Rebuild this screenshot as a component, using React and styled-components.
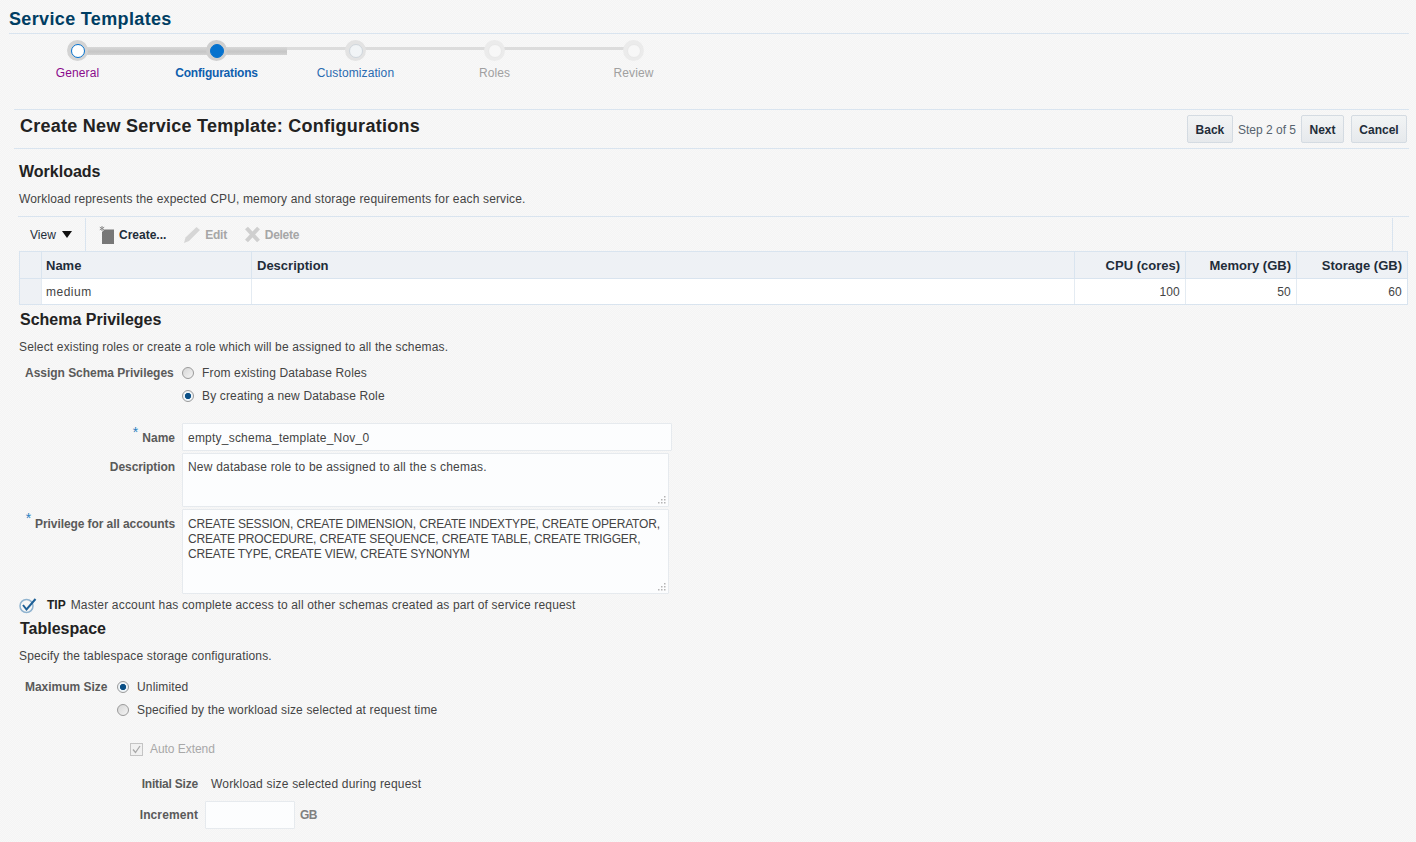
import React from 'react';
import styled, { createGlobalStyle } from 'styled-components';

const Global = createGlobalStyle`
  html, body { margin: 0; padding: 0; }
  body {
    font-family: "Liberation Sans", Arial, sans-serif;
    font-size: 12px;
    color: #3f3f3f;
    background: repeating-conic-gradient(#f4f4f4 0 25%, #f8f8f8 0 50%) 0 0 / 2px 2px;
  }
`;

const Page = styled.div`
  width: 1416px;
  height: 842px;
  overflow: hidden;
  display: flex;
  flex-direction: column;
`;

const PageHeader = styled.header`
  height: 33px;
  margin: 0 7px 0 9px;
  border-bottom: 1px solid #d9e4ef;
  display: flex;
  align-items: flex-end;
`;

const PageTitle = styled.h1`
  margin: 0 0 2px;
  font-size: 18px;
  line-height: 24px;
  font-weight: 700;
  letter-spacing: 0.35px;
  color: #003e63;
`;

const Train = styled.div`
  height: 75px;
  display: flex;
  padding-left: 8px;
  position: relative;
`;

const TrainTrack = styled.div`
  position: absolute;
  left: 78px;
  top: 13px;
  width: 556px;
  height: 3px;
  background: #dcdcdc;
`;

const TrainDone = styled.div`
  position: absolute;
  left: 78px;
  top: 13px;
  width: 209px;
  height: 8px;
  background: linear-gradient(#d8d8d8, #c6c6c6 60%, #d4d4d4);
`;

const Step = styled.div`
  width: 139px;
  display: flex;
  flex-direction: column;
  align-items: center;
  position: relative;
  padding-top: 6px;
`;

const Node = styled.div`
  width: 21px;
  height: 21px;
  box-sizing: border-box;
  border-radius: 50%;
  background: ${p => p.$ring};
  display: flex;
  align-items: center;
  justify-content: center;
`;

const Dot = styled.div`
  width: ${p => p.$size}px;
  height: ${p => p.$size}px;
  box-sizing: border-box;
  border-radius: 50%;
  background: ${p => p.$fill};
  border: 1px solid ${p => p.$edge};
`;

const StepLabel = styled.div`
  margin-top: 5px;
  line-height: 14px;
  letter-spacing: ${p => (p.$bold ? '-0.2px' : '0.1px')};
  color: ${p => p.$color};
  font-weight: ${p => (p.$bold ? 700 : 400)};
`;

const TitleBar = styled.div`
  height: 38px;
  margin: 0 7px 0 14px;
  border-top: 1px solid #d9e4ef;
  border-bottom: 1px solid #d9e4ef;
  display: flex;
  align-items: flex-start;
  justify-content: space-between;
`;

const FormTitle = styled.h2`
  margin: 5px 0 0 6px;
  font-size: 18px;
  line-height: 22px;
  font-weight: 700;
  letter-spacing: 0.26px;
  color: #222;
`;

const Actions = styled.div`
  display: flex;
  align-items: center;
  margin: 5px 2px 0 0;
`;

const ActionButton = styled.div`
  height: 28px;
  box-sizing: border-box;
  padding: 1px 8px 0;
  width: ${p => p.$w}px;
  justify-content: center;
  margin-left: ${p => p.$gap || 0}px;
  display: flex;
  align-items: center;
  border: 1px solid #d4dbe2;
  border-radius: 2px;
  background: linear-gradient(#f2f4f5, #e6e9ec);
  font-weight: 700;
  color: #1f2d3a;
`;

const StepInfo = styled.span`
  margin: 0 5px;
  padding-top: 1px;
  color: #57636f;
`;

const Section = styled.section`
  padding-left: 19px;
  margin-top: ${p => p.$top}px;
`;

const Heading = styled.h3`
  margin: 0;
  font-size: 16px;
  line-height: 20px;
  font-weight: 700;
  color: #222;
  margin-left: ${p => p.$indent || 0}px;
`;

const Intro = styled.p`
  margin: 7px 0 0;
  line-height: 20px;
  letter-spacing: 0.16px;
  color: #444;
`;

const Toolbar = styled.div`
  margin: 7px 7px 0 -1px;
  height: 35px;
  padding-top: 1px;
  box-sizing: border-box;
  border-top: 1px solid #d9e4ef;
  display: flex;
  align-items: center;
`;

const ViewMenu = styled.div`
  width: 68px;
  height: 100%;
  box-sizing: border-box;
  padding-left: 12px;
  border-right: 1px solid #d9e4ef;
  display: flex;
  align-items: center;
  gap: 6px;
  color: #1f2d3a;
`;

const Caret = styled.span`
  width: 0;
  height: 0;
  border-left: 5px solid transparent;
  border-right: 5px solid transparent;
  border-top: 7px solid #111;
`;

const ToolItem = styled.div`
  display: flex;
  align-items: center;
  gap: 4px;
  margin-left: ${p => p.$gap}px;
  font-weight: 700;
  letter-spacing: ${p => (p.$off ? '-0.3px' : '0')};
  color: ${p => (p.$off ? '#a6a6a6' : '#1f2d3a')};
`;

const ToolEnd = styled.div`
  margin-left: auto;
  width: 16px;
  height: 100%;
  border-left: 1px solid #d9e4ef;
`;

const Table = styled.div`
  width: 1389px;
  border: 1px solid #d9e4ef;
  box-sizing: border-box;
  height: 54px;
  display: grid;
  grid-template-columns: 21px 210px 823px 111px 111px 1fr;
  grid-template-rows: 27px 25px;
`;

const HeadCell = styled.div`
  background: #eef1f5;
  border-bottom: 1px solid #d9e4ef;
  border-left: ${p => (p.$first ? 'none' : '1px solid #d9e4ef')};
  padding: 1px 5px 0 ${p => p.$inset || 5}px;
  display: flex;
  align-items: center;
  justify-content: ${p => (p.$right ? 'flex-end' : 'flex-start')};
  font-weight: 700;
  font-size: 13px;
  color: #1f2d3a;
`;

const BodyCell = styled.div`
  background: #fff;
  border-left: 1px solid #e4ebf2;
  padding: 0 5px 0 ${p => p.$inset || 5}px;
  display: flex;
  align-items: center;
  justify-content: ${p => (p.$right ? 'flex-end' : 'flex-start')};
  letter-spacing: ${p => (p.$right ? '0.2px' : '0.5px')};
  color: #444;
`;

const RowHeader = styled.div`
  background: #eef1f5;
`;

const ChoiceGroup = styled.div`
  display: grid;
  grid-template-columns: ${p => p.$label}px 1fr;
  grid-auto-rows: 23px;
  margin: ${p => p.$top}px 0 0 6px;
  align-items: center;
`;

const GroupLabel = styled.span`
  font-weight: 700;
  color: #5a5a5a;
  letter-spacing: -0.03px;
`;

const Choice = styled.label`
  grid-column: 2;
  display: flex;
  align-items: center;
  gap: 8px;
  letter-spacing: 0.15px;
  color: #444;
`;

const Radio = styled.span`
  width: 12px;
  height: 12px;
  box-sizing: border-box;
  border-radius: 50%;
  border: 1px solid #9a9a9a;
  background: ${p => p.$on
    ? 'radial-gradient(circle, #0a4f86 0 2.8px, #eef4f8 3.4px)'
    : 'linear-gradient(135deg, #d6d6d6, #f4f4f4)'};
`;

const FormGrid = styled.div`
  display: grid;
  grid-template-columns: 156px auto;
  justify-content: start;
  margin: 16px 0 0 0;
  row-gap: 2px;
  column-gap: 7px;
`;

const FieldLabel = styled.div`
  text-align: right;
  font-weight: 700;
  color: #5a5a5a;
  line-height: 14px;
  letter-spacing: ${p => p.$ls || 0}px;
  padding-top: ${p => p.$pad || 0}px;
`;

const Req = styled.sup`
  color: #2a7fc0;
  font-weight: 400;
  font-size: 14px;
  line-height: 0;
  margin-right: 4px;
`;

const Field = styled.div`
  position: relative;
  box-sizing: border-box;
  width: ${p => p.$w}px;
  height: ${p => p.$h}px;
  padding: ${p => p.$pad}px 5px 0;
  border: 1px solid #e6eaee;
  border-radius: 1px;
  background: #fcfdfe;
  line-height: 15px;
  letter-spacing: ${p => p.$ls || 0}px;
  color: #444;
`;

const Grip = styled.svg`
  position: absolute;
  right: 1px;
  bottom: 1px;
`;

const Tip = styled.div`
  display: flex;
  align-items: center;
  height: 18px;
  margin-top: 2px;
  letter-spacing: 0.17px;
  color: #444;
`;

const TipWord = styled.strong`
  margin: 0 5px 0 10px;
  letter-spacing: 0;
  color: #222;
`;

const Disabled = styled.label`
  display: flex;
  align-items: center;
  gap: 7px;
  margin: 19px 0 0 111px;
  height: 18px;
  letter-spacing: -0.05px;
  color: #a8a8a8;
`;

const CheckBox = styled.span`
  width: 13px;
  height: 13px;
  box-sizing: border-box;
  border: 1px solid #c4c4c4;
  background: #f1f1f1;
  display: flex;
  align-items: center;
  justify-content: center;
`;

const Details = styled.div`
  display: grid;
  grid-template-columns: 179px auto;
  justify-content: start;
  align-items: center;
  column-gap: 7px;
  row-gap: 3px;
  grid-auto-rows: 28px;
  margin-top: 12px;
`;

const DetailValue = styled.span`
  margin-left: 6px;
  letter-spacing: 0.19px;
  color: #444;
`;

const UnitRow = styled.div`
  display: flex;
  align-items: center;
  gap: 5px;
  color: #808080;
  font-weight: 700;
  letter-spacing: -0.5px;
`;

const steps = [
  { name: 'General', ring: '#d3d3d3', size: 14, fill: '#fff', edge: '#0572ce', color: '#8a0a8c' },
  { name: 'Configurations', ring: '#cfcfcf', size: 14, fill: '#0572ce', edge: '#0572ce', color: '#0f5fae', bold: true },
  { name: 'Customization', ring: '#e3e3e3', size: 14, fill: '#f1f4f6', edge: '#cfd6dc', color: '#2a6bb0' },
  { name: 'Roles', ring: '#ebebeb', size: 14, fill: '#f7f7f7', edge: '#e8e8e8', color: '#a0a0a0' },
  { name: 'Review', ring: '#ebebeb', size: 14, fill: '#f7f7f7', edge: '#e8e8e8', color: '#a0a0a0' },
];

const ResizeGrip = () => (
  <Grip width="9" height="9" viewBox="0 0 9 9" fill="#b4b4b4">
    <rect x="6" y="0" width="1.5" height="1.5" />
    <rect x="3" y="3" width="1.5" height="1.5" />
    <rect x="6" y="3" width="1.5" height="1.5" />
    <rect x="0" y="6" width="1.5" height="1.5" />
    <rect x="3" y="6" width="1.5" height="1.5" />
    <rect x="6" y="6" width="1.5" height="1.5" />
  </Grip>
);

export default function App() {
  return (
    <Page>
      <Global />
      <PageHeader><PageTitle>Service Templates</PageTitle></PageHeader>
      <Train>
        <TrainTrack />
        <TrainDone />
        {steps.map(s => (
          <Step key={s.name}>
            <Node $ring={s.ring}><Dot $size={s.size} $fill={s.fill} $edge={s.edge} /></Node>
            <StepLabel $color={s.color} $bold={s.bold}>{s.name}</StepLabel>
          </Step>
        ))}
      </Train>
      <TitleBar>
        <FormTitle>Create New Service Template: Configurations</FormTitle>
        <Actions>
          <ActionButton $w={46}>Back</ActionButton>
          <StepInfo>Step 2 of 5</StepInfo>
          <ActionButton $w={43}>Next</ActionButton>
          <ActionButton $w={56} $gap={7}>Cancel</ActionButton>
        </Actions>
      </TitleBar>

      <Section $top={13}>
        <Heading>Workloads</Heading>
        <Intro>Workload represents the expected CPU, memory and storage requirements for each service.</Intro>
        <Toolbar>
          <ViewMenu>View <Caret /></ViewMenu>
          <ToolItem $gap={13}>
            <svg width="16" height="18" viewBox="0 0 16 18">
              <path d="M5.500 3.500H15V18H3V6z" fill="#777" />
              <path d="M3 0v5M.8 1.200l4.400 2.600M.8 3.800l4.400-2.600" stroke="#8a8a8a" strokeWidth="1" />
            </svg>
            Create...
          </ToolItem>
          <ToolItem $gap={18} $off>
            <svg width="17" height="17" viewBox="0 0 17 17">
              <path d="M0 17l1.500-5.500L12.500 1 16 4 5 15z" fill="#d6d6d6" />
            </svg>
            Edit
          </ToolItem>
          <ToolItem $gap={17} $off>
            <svg width="17" height="17" viewBox="0 0 17 17">
              <path d="M2.500 2l12 13M14.500 2l-12 13" stroke="#cfcfcf" strokeWidth="4" fill="none" />
            </svg>
            Delete
          </ToolItem>
          <ToolEnd />
        </Toolbar>
        <Table>
          <HeadCell $first />
          <HeadCell $inset={4}>Name</HeadCell>
          <HeadCell>Description</HeadCell>
          <HeadCell $right>CPU (cores)</HeadCell>
          <HeadCell $right>Memory (GB)</HeadCell>
          <HeadCell $right>Storage (GB)</HeadCell>
          <RowHeader />
          <BodyCell $inset={4}>medium</BodyCell>
          <BodyCell />
          <BodyCell $right>100</BodyCell>
          <BodyCell $right>50</BodyCell>
          <BodyCell $right>60</BodyCell>
        </Table>
      </Section>

      <Section $top={5}>
        <Heading $indent={1}>Schema Privileges</Heading>
        <Intro>Select existing roles or create a role which will be assigned to all the schemas.</Intro>
        <ChoiceGroup $label={157} $top={4}>
          <GroupLabel>Assign Schema Privileges</GroupLabel>
          <Choice><Radio />From existing Database Roles</Choice>
          <Choice><Radio $on />By creating a new Database Role</Choice>
        </ChoiceGroup>
        <FormGrid>
          <FieldLabel $pad={8}><Req>*</Req>Name</FieldLabel>
          <Field $w={490} $h={28} $pad={7} $ls={0.22}>empty_schema_template_Nov_0</Field>
          <FieldLabel $pad={7} $ls={-0.08}>Description</FieldLabel>
          <Field $w={487} $h={54} $pad={6} $ls={0.2}>New database role to be assigned to all the s chemas.<ResizeGrip /></Field>
          <FieldLabel $pad={8} $ls={-0.08}><Req>*</Req>Privilege for all accounts</FieldLabel>
          <Field $w={487} $h={85} $pad={7} $ls={-0.17}>
            CREATE SESSION, CREATE DIMENSION, CREATE INDEXTYPE, CREATE OPERATOR,<br />
            CREATE PROCEDURE, CREATE SEQUENCE, CREATE TABLE, CREATE TRIGGER,<br />
            CREATE TYPE, CREATE VIEW, CREATE SYNONYM
            <ResizeGrip />
          </Field>
        </FormGrid>
        <Tip>
          <svg width="18" height="17" viewBox="0 0 18 17">
            <circle cx="7.500" cy="9" r="6.500" fill="none" stroke="#8fb3cf" strokeWidth="1.500" />
            <path d="M4 8l3.500 4.500L16.500 2" fill="none" stroke="#1d5f96" strokeWidth="2" />
          </svg>
          <TipWord>TIP</TipWord>
          Master account has complete access to all other schemas created as part of service request
        </Tip>
      </Section>

      <Section $top={5}>
        <Heading $indent={1}>Tablespace</Heading>
        <Intro>Specify the tablespace storage configurations.</Intro>
        <ChoiceGroup $label={92} $top={9}>
          <GroupLabel>Maximum Size</GroupLabel>
          <Choice><Radio $on />Unlimited</Choice>
          <Choice><Radio />Specified by the workload size selected at request time</Choice>
        </ChoiceGroup>
        <Disabled>
          <CheckBox>
            <svg width="9" height="9" viewBox="0 0 9 9">
              <path d="M1 4.500l2.500 3L8 1" fill="none" stroke="#a8a8a8" strokeWidth="1.300" />
            </svg>
          </CheckBox>
          Auto Extend
        </Disabled>
        <Details>
          <FieldLabel $ls={-0.2}>Initial Size</FieldLabel>
          <DetailValue>Workload size selected during request</DetailValue>
          <FieldLabel $ls={0.1}>Increment</FieldLabel>
          <UnitRow><Field $w={90} $h={28} $pad={6} />GB</UnitRow>
        </Details>
      </Section>
    </Page>
  );
}
